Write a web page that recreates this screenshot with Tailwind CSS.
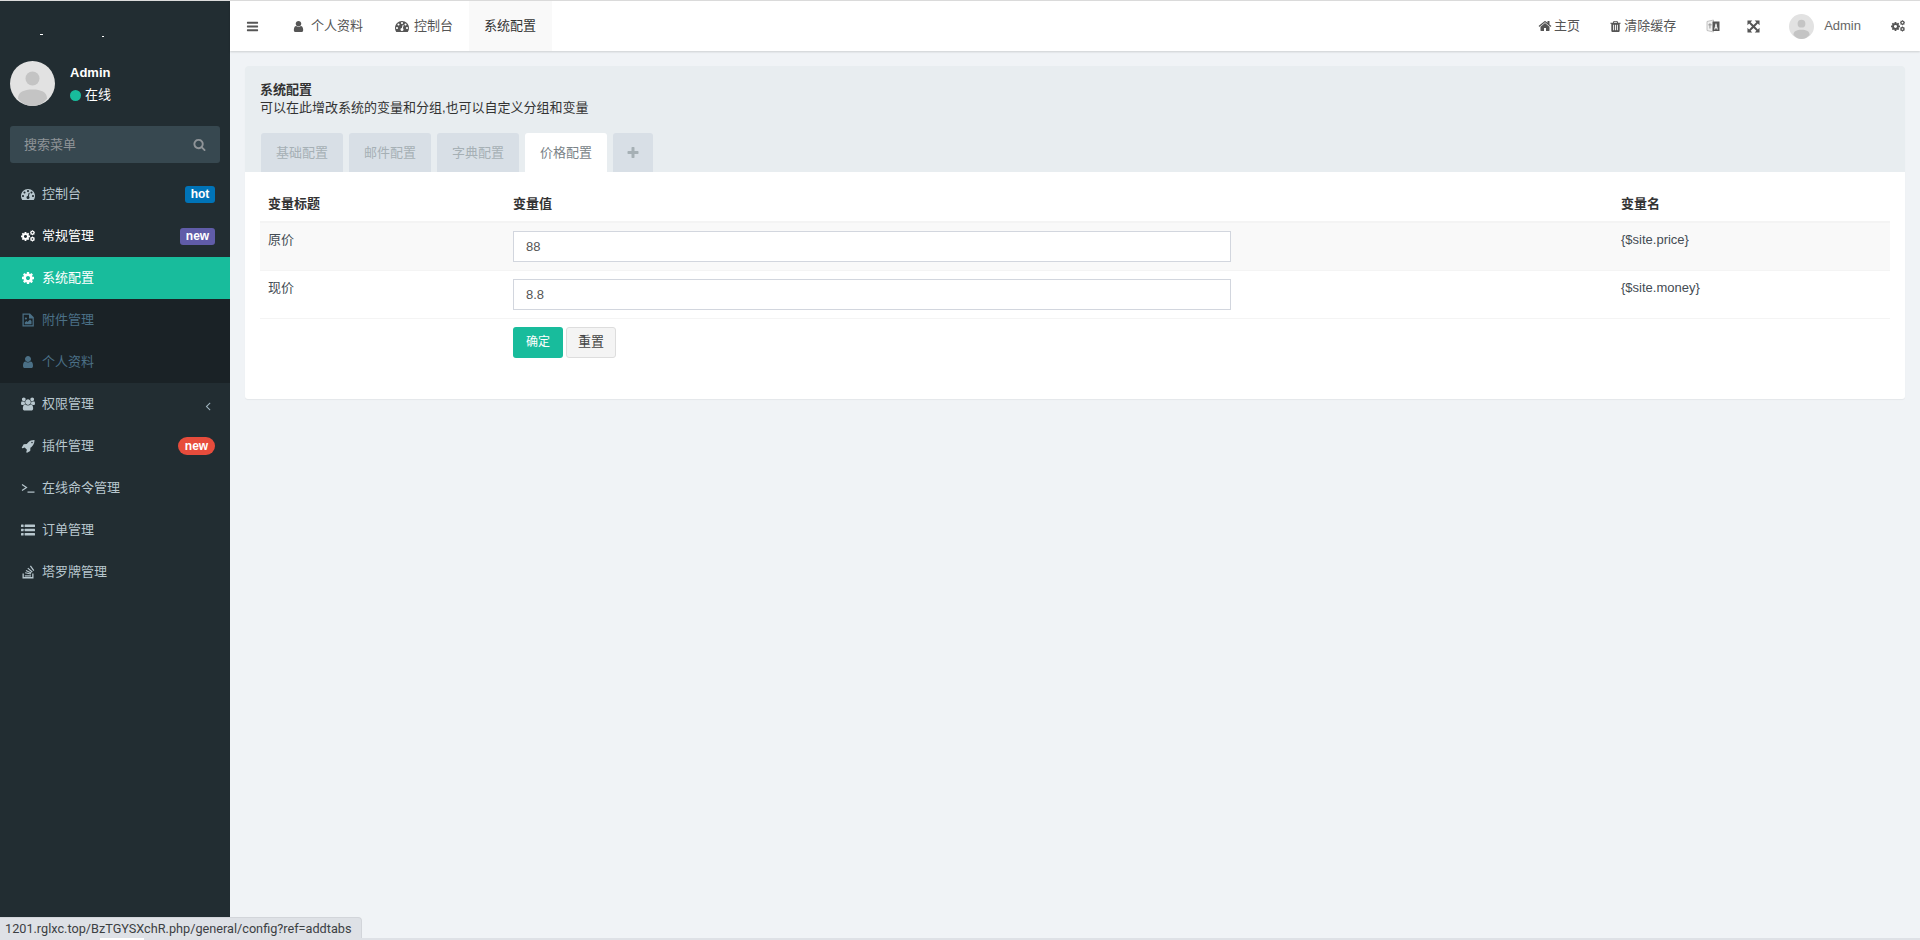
<!DOCTYPE html>
<html lang="zh">
<head>
<meta charset="utf-8">
<title>系统配置</title>
<script src="https://cdn.jsdelivr.net/npm/@tailwindcss/browser@4"></script>
</head>
<body class="h-[940px] overflow-hidden bg-[#f0f3f6] font-['Liberation_Sans','Noto_Sans_CJK_SC',sans-serif] text-[13px] text-[#444c54] relative">
<svg class="hidden">
<defs>
<symbol id="user" viewBox="0 0 1792 1792"><path d="M1536 1399q0 109-62.5 187t-150.5 78h-854q-88 0-150.5-78t-62.5-187q0-85 8.5-160.5t31.5-152 58.5-131 94-89 134.5-34.5q131 128 313 128t313-128q76 0 134.5 34.5t94 89 58.5 131 31.5 152 8.5 160.5zm-256-887q0 159-112.5 271.5t-271.5 112.5-271.5-112.5-112.5-271.5 112.5-271.5 271.5-112.5 271.5 112.5 112.5 271.5z"/></symbol>
<symbol id="bars" viewBox="0 0 1792 1792"><path d="M1664 1344v128q0 26-19 45t-45 19h-1408q-26 0-45-19t-19-45v-128q0-26 19-45t45-19h1408q26 0 45 19t19 45zm0-512v128q0 26-19 45t-45 19h-1408q-26 0-45-19t-19-45v-128q0-26 19-45t45-19h1408q26 0 45 19t19 45zm0-512v128q0 26-19 45t-45 19h-1408q-26 0-45-19t-19-45v-128q0-26 19-45t45-19h1408q26 0 45 19t19 45z"/></symbol>
<symbol id="cog" viewBox="0 0 1792 1792"><path d="M1152 896q0-106-75-181t-181-75-181 75-75 181 75 181 181 75 181-75 75-181zm512-109v222q0 12-8 23t-20 13l-185 28q-19 54-39 91 35 50 107 138 10 12 10 25t-9 23q-27 37-99 108t-94 71q-12 0-26-9l-138-108q-44 23-91 38-16 136-29 186-7 28-36 28h-222q-14 0-24.5-8.5t-11.5-21.5l-28-184q-49-16-90-37l-141 107q-10 9-25 9-14 0-25-11-126-114-165-168-7-10-7-23 0-12 8-23 15-21 51-66.5t54-70.5q-27-50-41-99l-183-27q-13-2-21-12.5t-8-23.5v-222q0-12 8-23t19-13l186-28q14-46 39-92-40-57-107-138-10-12-10-24 0-10 9-23 26-36 98.5-107.5t94.5-71.5q13 0 26 10l138 107q44-23 91-38 16-136 29-186 7-28 36-28h222q14 0 24.5 8.5t11.5 21.5l28 184q49 16 90 37l142-107q9-9 24-9 13 0 25 10 129 119 165 170 7 8 7 22 0 12-8 23-15 21-51 66.5t-54 70.5q26 50 41 98l183 28q13 2 21 12.5t8 23.5z"/></symbol>
<symbol id="cogs" viewBox="0 0 1792 1792"><use href="#cog" x="-96" y="280" width="1340" height="1340"/><use href="#cog" x="1086" y="96" width="760" height="760"/><use href="#cog" x="1086" y="900" width="760" height="760"/></symbol>
<symbol id="home" viewBox="0 0 1792 1792"><path d="M1472 992v480q0 26-19 45t-45 19h-384v-384h-256v384h-384q-26 0-45-19t-19-45v-480q0-1 .5-3t.5-3l575-474 575 474q1 2 1 6zm223-69l-62 74q-8 9-21 11h-3q-13 0-21-7l-692-577-692 577q-12 8-24 7-13-2-21-11l-62-74q-8-10-7-23.5t11-21.5l719-599q32-26 76-26t76 26l244 204v-195q0-14 9-23t23-9h192q14 0 23 9t9 23v408l219 182q10 8 11 21.5t-7 23.5z"/></symbol>
<symbol id="trash" viewBox="0 0 1792 1792"><path d="M704 1376v-704q0-14-9-23t-23-9h-64q-14 0-23 9t-9 23v704q0 14 9 23t23 9h64q14 0 23-9t9-23zm256 0v-704q0-14-9-23t-23-9h-64q-14 0-23 9t-9 23v704q0 14 9 23t23 9h64q14 0 23-9t9-23zm256 0v-704q0-14-9-23t-23-9h-64q-14 0-23 9t-9 23v704q0 14 9 23t23 9h64q14 0 23-9t9-23zm-544-992h448l-48-117q-7-9-17-11h-317q-10 2-17 11zm928 32v64q0 14-9 23t-23 9h-96v948q0 83-47 143.5t-113 60.5h-832q-66 0-113-58.5t-47-141.5v-952h-96q-14 0-23-9t-9-23v-64q0-14 9-23t23-9h309l70-167q15-37 54-63t79-26h320q40 0 79 26t54 63l70 167h309q14 0 23 9t9 23z"/></symbol>
<symbol id="plus" viewBox="0 0 1792 1792"><path d="M1600 736v192q0 40-28 68t-68 28h-416v416q0 40-28 68t-68 28h-192q-40 0-68-28t-28-68v-416h-416q-40 0-68-28t-28-68v-192q0-40 28-68t68-28h416v-416q0-40 28-68t68-28h192q40 0 68 28t28 68v416h416q40 0 68 28t28 68z"/></symbol>
<symbol id="search" viewBox="0 0 1792 1792"><path d="M1216 832q0-185-131.5-316.5t-316.5-131.5-316.5 131.5-131.5 316.5 131.5 316.5 316.5 131.5 316.5-131.5 131.5-316.5zm512 832q0 52-38 90t-90 38q-54 0-90-38l-343-342q-179 124-399 124-143 0-273.5-55.5t-225-150-150-225-55.5-273.5 55.5-273.5 150-225 225-150 273.5-55.5 273.5 55.5 225 150 150 225 55.5 273.5q0 220-124 399l343 343q37 37 37 90z"/></symbol>
<symbol id="angle" viewBox="0 0 1792 1792"><path d="M1203 544q0 13-10 23l-393 393 393 393q10 10 10 23t-10 23l-50 50q-10 10-23 10t-23-10l-466-466q-10-10-10-23t10-23l466-466q10-10 23-10t23 10l50 50q10 10 10 23z"/></symbol>
<symbol id="rocket" viewBox="0 0 1792 1792"><path d="M1504 448q0-40-28-68t-68-28-68 28-28 68 28 68 68 28 68-28 28-68zm224-288q0 249-75.5 430.5t-253.5 360.5q-81 80-195 176l-20 379q-2 16-16 26l-384 224q-7 4-16 4-12 0-23-9l-64-64q-13-14-8-32l85-276-281-281-276 85q-3 1-9 1-14 0-23-9l-64-64q-17-19-5-39l224-384q10-14 26-16l379-20q96-114 176-195 188-187 358-258t431-71q14 0 24 9.5t10 22.5z"/></symbol>
<symbol id="users" viewBox="0 0 1920 1792"><path d="M593 896q-162 5-265 128h-134q-82 0-138-40.5t-56-118.5q0-353 124-353 6 0 43.5 21t97.5 42.5 119 21.5q67 0 133-23-5 37-5 66 0 139 81 256zm1071 637q0 120-73 189.5t-194 69.5h-874q-121 0-194-69.5t-73-189.5q0-53 3.5-103.5t14-109 26.5-108.5 43-97.5 62-81 85.5-53.5 111.5-20q10 0 43 21.5t73 48 107 48 135 21.5 135-21.5 107-48 73-48 43-21.5q61 0 111.5 20t85.5 53.5 62 81 43 97.5 26.5 108.5 14 109 3.5 103.5zm-1024-1277q0 106-75 181t-181 75-181-75-75-181 75-181 181-75 181 75 75 181zm704 384q0 159-112.5 271.5t-271.5 112.5-271.5-112.5-112.5-271.5 112.5-271.5 271.5-112.5 271.5 112.5 112.5 271.5zm576 225q0 78-56 118.5t-138 40.5h-134q-103-123-265-128 81-117 81-256 0-29-5-66 66 23 133 23 59 0 119-21.5t97.5-42.5 43.5-21q124 0 124 353zm-128-609q0 106-75 181t-181 75-181-75-75-181 75-181 181-75 181 75 75 181z"/></symbol>
<symbol id="dash" viewBox="0 0 1792 1792"><path d="M384 1152q0-53-37.5-90.5t-90.5-37.5-90.5 37.5-37.5 90.5 37.5 90.5 90.5 37.5 90.5-37.5 37.5-90.5zm192-448q0-53-37.5-90.5t-90.5-37.5-90.5 37.5-37.5 90.5 37.5 90.5 90.5 37.5 90.5-37.5 37.5-90.5zm428 481l101-382q6-26-7.5-48.5t-38.5-29.5-48 6.5-30 39.5l-101 382q-60 5-107 43.5t-63 98.5q-20 77 20 146t117 89 146-20 89-117q16-60-6-117t-72-91zm660-33q0-53-37.5-90.5t-90.5-37.5-90.5 37.5-37.5 90.5 37.5 90.5 90.5 37.5 90.5-37.5 37.5-90.5zm-640-640q0-53-37.5-90.5t-90.5-37.5-90.5 37.5-37.5 90.5 37.5 90.5 90.5 37.5 90.5-37.5 37.5-90.5zm448 192q0-53-37.5-90.5t-90.5-37.5-90.5 37.5-37.5 90.5 37.5 90.5 90.5 37.5 90.5-37.5 37.5-90.5zm320 448q0 261-141 483-19 29-54 29h-1402q-35 0-54-29-141-221-141-483 0-182 71-348t191-286 286-191 348-71 348 71 286 191 191 286 71 348z"/></symbol>
<symbol id="list" viewBox="0 0 14 14"><rect x="0" y="1.500" width="2.600" height="2.600" rx=".5"/><rect x="0" y="5.700" width="2.600" height="2.600" rx=".5"/><rect x="0" y="9.900" width="2.600" height="2.600" rx=".5"/><rect x="3.600" y="1.500" width="10.400" height="2.600" rx=".5"/><rect x="3.600" y="5.700" width="10.400" height="2.600" rx=".5"/><rect x="3.600" y="9.900" width="10.400" height="2.600" rx=".5"/></symbol>
<symbol id="term" viewBox="0 0 14 14"><path d="M1 3.500 L5.500 6.500 L1 9.500" fill="none" stroke="currentColor" stroke-width="1.200"/><rect x="6.500" y="10.500" width="7" height="1.200"/></symbol>
<symbol id="file" viewBox="0 0 14 14"><path fill-rule="evenodd" d="M1.500 .5h7.500L12.800 4.300V13.500H1.500zM2.700 1.700v10.600h8.900V5.500H8V1.700z"/><path d="M3.800 11.200V9.500l1.600-1.600 1.200 1.200 2.400-2.600 1.500 1.500v3.200z"/><circle cx="4.900" cy="5.500" r="1.100"/></symbol>
<symbol id="stack" viewBox="0 0 14 14"><path d="M1.500 8.500h1.300v3.600h8.400V8.500h1.300V13.500H1.500z"/><rect x="3.800" y="10.300" width="6.200" height="1.200"/><path d="M4 8.300l5.800 1.200.25-1.100-5.800-1.200zM4.700 6l5.300 2.500.5-1.100-5.300-2.500zM6.400 3.600l4.500 3.800.75-.9L7.150 2.700zM8.900 1.300l3.400 4.700 1-.7L9.900.6z"/></symbol>
<symbol id="arrows" viewBox="0 0 14 14"><path d="M.5.500h5.200L3.900 2.300 7 5.400 10.100 2.300 8.300.5h5.200v5.200l-1.800-1.800L8.600 7l3.100 3.100 1.800-1.800v5.200H8.300l1.800-1.800L7 8.600l-3.100 3.100 1.800 1.800H.5V8.300l1.800 1.800L5.400 7 2.300 3.900.5 5.700z"/></symbol>
<symbol id="lang" viewBox="0 0 14 14"><path fill="#f1f1f1" stroke="#b5b5b5" stroke-width=".8" d="M1 2.500 7.500 1v12L1 11.500z"/><path fill="#555" d="M6.500 2.500H13.500V12H6.500z"/><path fill="#fff" d="M8.200 10.500 9.600 4.500h.8l1.400 6h-1l-.25-1.300H9.450L9.200 10.500zM9.650 8.300h.7L10 6.300z"/><path fill="#888" d="M2.200 5.500h3.600v.8H2.200zM3.500 4.300h.9v5.200h-.9z"/></symbol>
<symbol id="avatar" viewBox="0 0 45 45"><circle cx="22.500" cy="22.500" r="22.500" fill="#e2e2e2"/><circle cx="22.500" cy="17.500" r="7" fill="#c4c4c4"/><path d="M8 37.500C8 31 14 28.500 22.500 28.500S37 31 37 37.500C33.500 42.500 28 45 22.500 45S11.500 42.500 8 37.500z" fill="#c4c4c4"/></symbol>
</defs>
</svg>

<div class="h-px bg-[#dcdcdc]"></div>
<div class="flex h-[937px]">
  <aside class="w-[230px] shrink-0 bg-[#222d32] text-[#b8c7ce] flex flex-col">
    <div class="h-[60px] shrink-0 relative">
      <span class="absolute left-[40px] top-[33px] w-[3px] h-px bg-white"></span>
      <span class="absolute left-[102px] top-[35px] w-[2px] h-px bg-white"></span>
    </div>
    <div class="flex px-[10px] h-[65px] shrink-0">
      <svg class="w-[45px] h-[45px]"><use href="#avatar"/></svg>
      <div class="ml-[15px] mt-[3px] text-white">
        <div class="font-bold leading-[18px] h-[22px]">Admin</div>
        <div class="flex items-center leading-[18px]"><span class="w-[11px] h-[11px] rounded-full bg-[#18bc9c] mr-[4px]"></span>在线</div>
      </div>
    </div>
    <div class="mx-[10px] h-[37px] shrink-0 rounded-[3px] bg-[#374850] flex items-center justify-between pl-[14px] pr-[14px] text-[#8f9498]">
      <span>搜索菜单</span>
      <svg class="w-[13px] h-[13px] fill-current"><use href="#search"/></svg>
    </div>
    <nav class="mt-[10px] flex flex-col">
      <a class="h-[42px] flex items-center pl-[21px] pr-[15px]"><svg class="w-[14px] h-[14px] fill-current mr-[7px]"><use href="#dash"/></svg><span class="flex-1">控制台</span><span class="h-[17px] w-[30px] rounded-[3px] bg-[#0073b7] text-white text-[12px] font-bold flex items-center justify-center">hot</span></a>
      <a class="h-[42px] flex items-center pl-[21px] pr-[15px] text-white"><svg class="w-[14px] h-[14px] fill-current mr-[7px]"><use href="#cogs"/></svg><span class="flex-1">常规管理</span><span class="h-[17px] w-[35px] rounded-[3px] bg-[#605ca8] text-white text-[12px] font-bold flex items-center justify-center">new</span></a>
      <a class="h-[42px] flex items-center pl-[21px] pr-[15px] text-white bg-[#18bc9c]"><svg class="w-[14px] h-[14px] fill-current mr-[7px]"><use href="#cog"/></svg><span>系统配置</span></a>
      <div class="bg-[#1a2226] text-[#4b7086]">
        <a class="h-[42px] flex items-center pl-[21px]"><svg class="w-[14px] h-[14px] fill-current mr-[7px]"><use href="#file"/></svg><span>附件管理</span></a>
        <a class="h-[42px] flex items-center pl-[21px]"><svg class="w-[14px] h-[14px] fill-current mr-[7px]"><use href="#user"/></svg><span>个人资料</span></a>
      </div>
      <a class="h-[42px] flex items-center pl-[21px] pr-[15px]"><svg class="w-[14px] h-[14px] fill-current mr-[7px]"><use href="#users"/></svg><span class="flex-1">权限管理</span><svg class="w-[14px] h-[14px] fill-current text-[#9fb4bf] mt-[3px] mr-[0px]"><use href="#angle"/></svg></a>
      <a class="h-[42px] flex items-center pl-[21px] pr-[15px]"><svg class="w-[14px] h-[14px] fill-current mr-[7px]"><use href="#rocket"/></svg><span class="flex-1">插件管理</span><span class="h-[18px] w-[37px] rounded-full bg-[#e74c3c] text-white text-[12px] font-bold flex items-center justify-center">new</span></a>
      <a class="h-[42px] flex items-center pl-[21px] pr-[15px]"><svg class="w-[14px] h-[14px] fill-current mr-[7px]"><use href="#term"/></svg><span>在线命令管理</span></a>
      <a class="h-[42px] flex items-center pl-[21px] pr-[15px]"><svg class="w-[14px] h-[14px] fill-current mr-[7px]"><use href="#list"/></svg><span>订单管理</span></a>
      <a class="h-[42px] flex items-center pl-[21px] pr-[15px]"><svg class="w-[14px] h-[14px] fill-current mr-[7px]"><use href="#stack"/></svg><span>塔罗牌管理</span></a>
    </nav>
  </aside>

  <main class="flex-1 min-w-0 flex flex-col">
    <header class="h-[50px] shrink-0 bg-white flex items-center justify-between shadow-[0_1px_2px_rgba(0,0,0,0.15)] text-[#555]">
      <div class="flex items-center h-full">
        <a class="w-[45px] h-full flex items-center justify-center"><svg class="w-[13px] h-[13px] fill-current"><use href="#bars"/></svg></a>
        <a class="h-full flex items-center pl-[17px] pr-[16px]"><svg class="w-[13px] h-[13px] fill-current mr-[6px]"><use href="#user"/></svg>个人资料</a>
        <a class="h-full flex items-center pl-[16px] pr-[16px]"><svg class="w-[14px] h-[14px] fill-current mr-[5px]"><use href="#dash"/></svg>控制台</a>
        <a class="h-full flex items-center pl-[15px] pr-[16px] bg-[#f9f9f9] text-[#333]">系统配置</a>
      </div>
      <div class="flex items-center h-full">
        <a class="h-full flex items-center"><svg class="w-[14px] h-[14px] fill-current mr-[2px]"><use href="#home"/></svg>主页</a>
        <a class="h-full flex items-center ml-[29px]"><svg class="w-[13px] h-[13px] fill-current mr-[2px]"><use href="#trash"/></svg>清除缓存</a>
        <a class="h-full flex items-center ml-[30px]"><svg class="w-[14px] h-[14px] fill-current"><use href="#lang"/></svg></a>
        <a class="h-full flex items-center ml-[27px]"><svg class="w-[13px] h-[13px] fill-current"><use href="#arrows"/></svg></a>
        <a class="h-full flex items-center ml-[29px]"><svg class="w-[25px] h-[25px] mr-[10px]"><use href="#avatar"/></svg><span class="text-[#666]">Admin</span></a>
        <a class="h-full flex items-center ml-[30px] mr-[15px]"><svg class="w-[14px] h-[14px] fill-current"><use href="#cogs"/></svg></a>
      </div>
    </header>

    <section class="mx-[15px] mt-[15px] rounded-[3px] bg-white shadow-[0_1px_1px_rgba(0,0,0,0.05)] h-[333px] overflow-hidden">
      <div class="h-[106px] bg-[#e8edf0] pt-[15px] px-[15px] text-[#333]">
        <div class="font-bold leading-[18px]">系统配置</div>
        <div class="leading-[18px]">可以在此增改系统的变量和分组,也可以自定义分组和变量</div>
        <div class="flex gap-[6px] mt-[16px] ml-[1px]">
          <a class="w-[82px] h-[39px] rounded-t-[3px] bg-[#d8dfe6] text-[#a6b0b5] flex items-center justify-center">基础配置</a>
          <a class="w-[82px] h-[39px] rounded-t-[3px] bg-[#d8dfe6] text-[#a6b0b5] flex items-center justify-center">邮件配置</a>
          <a class="w-[82px] h-[39px] rounded-t-[3px] bg-[#d8dfe6] text-[#a6b0b5] flex items-center justify-center">字典配置</a>
          <a class="w-[82px] h-[39px] rounded-t-[3px] bg-white text-[#7a8388] flex items-center justify-center">价格配置</a>
          <a class="w-[40px] h-[39px] rounded-t-[3px] bg-[#d8dfe6] text-[#a6b0b5] flex items-center justify-center"><svg class="w-[14px] h-[14px] fill-current"><use href="#plus"/></svg></a>
        </div>
      </div>
      <div class="px-[15px] pt-[15px]">
        <table class="w-full table-fixed border-collapse text-left">
          <colgroup><col class="w-[245px]"><col class="w-[1108px]"><col></colgroup>
          <thead class="text-[#333]">
            <tr class="h-[35px]"><th class="px-[8px] font-bold">变量标题</th><th class="px-[8px] font-bold">变量值</th><th class="px-[8px] font-bold">变量名</th></tr>
          </thead>
          <tbody>
            <tr class="h-[48px] bg-[#f9f9f9] border-t-2 border-t-[#f4f4f4] border-b border-b-[#f4f4f4]">
              <td class="px-[8px] align-top pt-[8px] leading-[18px]">原价</td>
              <td class="px-[8px] align-top pt-[8px]"><input value="88" class="w-[718px] h-[31px] border border-[#d2d6de] bg-white px-[12px] text-[13px] text-[#555] outline-none"></td>
              <td class="px-[8px] align-top pt-[8px] leading-[18px]">{$site.price}</td>
            </tr>
            <tr class="h-[48px] border-b border-b-[#f4f4f4]">
              <td class="px-[8px] align-top pt-[8px] leading-[18px]">现价</td>
              <td class="px-[8px] align-top pt-[8px]"><input value="8.8" class="w-[718px] h-[31px] border border-[#d2d6de] bg-white px-[12px] text-[13px] text-[#555] outline-none"></td>
              <td class="px-[8px] align-top pt-[8px] leading-[18px]">{$site.money}</td>
            </tr>
            <tr>
              <td></td>
              <td class="px-[8px] pt-[8px]"><div class="flex gap-[3px]">
                <button class="w-[50px] h-[31px] rounded-[3px] bg-[#18bc9c] text-white text-[12px]">确定</button>
                <button class="w-[50px] h-[31px] rounded-[3px] bg-[#f4f4f4] border border-[#ddd] text-[#444] text-[13px]">重置</button>
              </div></td>
              <td></td>
            </tr>
          </tbody>
        </table>
      </div>
    </section>
  </main>
</div>
<div class="h-[2px] bg-[#dee1e6] flex"><span class="ml-[100px] w-[44px] bg-white"></span></div>
<div class="absolute left-0 bottom-[2px] h-[21px] w-[362px] bg-[#dee1e6] rounded-tr-[4px] border-t border-r border-[#d2d5da] pl-[5px] font-['Roboto','Noto_Sans',sans-serif] text-[12.7px] leading-[21px] text-[#3c4043] whitespace-nowrap">1201.rglxc.top/BzTGYSXchR.php/general/config?ref=addtabs</div>
</body>
</html>
